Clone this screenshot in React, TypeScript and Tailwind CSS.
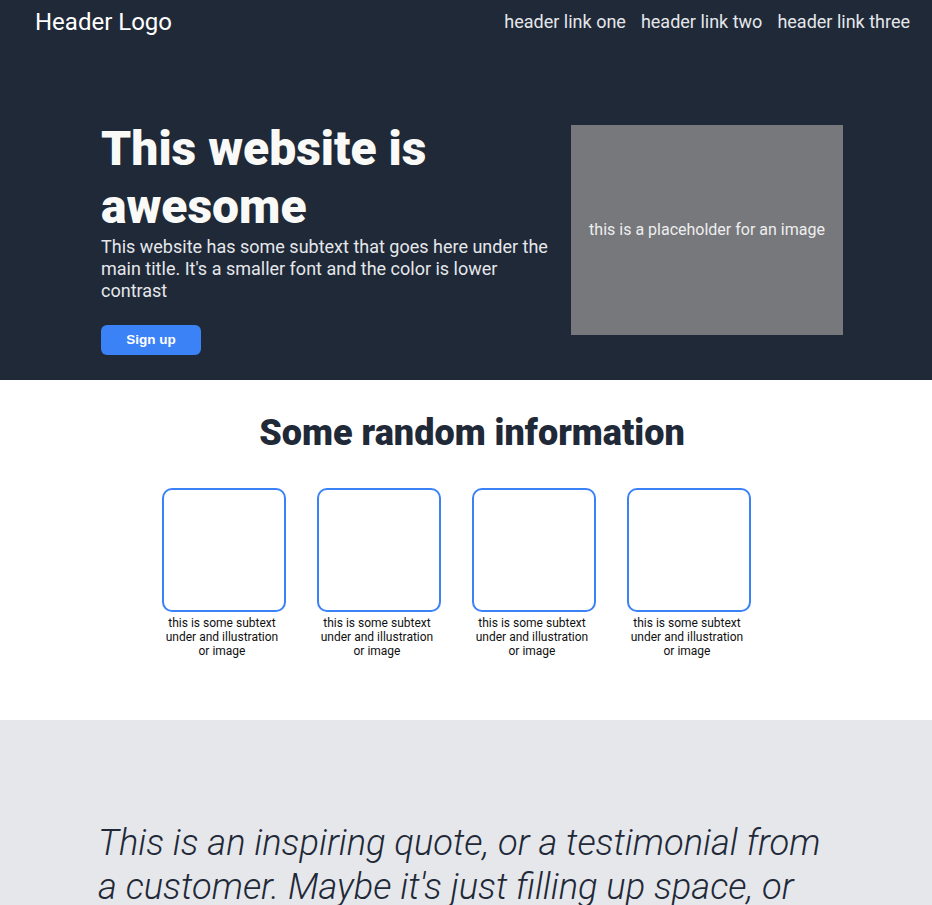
const cards = [1, 2, 3, 4]

function Header() {
  return (
    <header className="flex items-center justify-between pl-[35px] pr-[22px] h-[43px]">
      <div className="text-[24px] text-white">Header Logo</div>
      <nav className="flex gap-[15px] text-[18px] text-[#e5e7eb]">
        <a href="#">header link one</a>
        <a href="#">header link two</a>
        <a href="#">header link three</a>
      </nav>
    </header>
  )
}

function Hero() {
  return (
    <section className="flex items-start pl-[101px] pt-[77px] pb-[25px] gap-[15px]">
      <div className="w-[455px]">
        <h1 className="text-[48px] leading-[58px] font-black text-[#f9faf8]">This website is awesome</h1>
        <p className="text-[18px] leading-[22px] text-[#e5e7eb]">
          This website has some subtext that goes here under the main title. It's a smaller font and the color is lower contrast
        </p>
        <button className="mt-[23px] w-[100px] h-[30px] rounded-md bg-[#3b82f6] text-white text-[13.5px] font-bold font-['Liberation_Sans',Arial,sans-serif]">
          Sign up
        </button>
      </div>
      <div className="mt-[5px] w-[272px] h-[210px] bg-[#76787c] flex items-center justify-center text-[16px] text-[#eeeeee]">
        this is a placeholder for an image
      </div>
    </section>
  )
}

function Info() {
  return (
    <section className="bg-white h-[340px] pt-[33px]">
      <h2 className="text-center text-[36px] leading-[40px] font-black text-[#1f2937] pl-[12px]">Some random information</h2>
      <div className="mt-[35px] flex justify-center gap-[31px] pr-[19px]">
        {cards.map((c) => (
          <div key={c} className="w-[124px] flex flex-col items-center">
            <div className="w-[124px] h-[124px] border-2 border-[#3b82f6] rounded-[10px]"></div>
            <p className="mt-[4px] pr-[4px] text-[12px] leading-[14px] text-center text-[#111] w-[120px]">
              this is some subtext under and illustration or image
            </p>
          </div>
        ))}
      </div>
    </section>
  )
}

function Quote() {
  return (
    <section className="bg-[#e5e7eb] pt-[101px] pb-[100px] pl-[98px]">
      <p className="w-[745px] text-[36.3px] leading-[44px] italic font-light text-[#1f2937]">
        This is an inspiring quote, or a testimonial from a customer. Maybe it's just filling up space, or maybe people will actually read it. Who knows? All I know is that it looks cool.
      </p>
    </section>
  )
}

export default function App() {
  return (
    <div className="font-['Roboto',sans-serif] min-h-[905px]">
      <div className="bg-[#1f2937]">
        <Header />
        <Hero />
      </div>
      <Info />
      <Quote />
    </div>
  )
}
